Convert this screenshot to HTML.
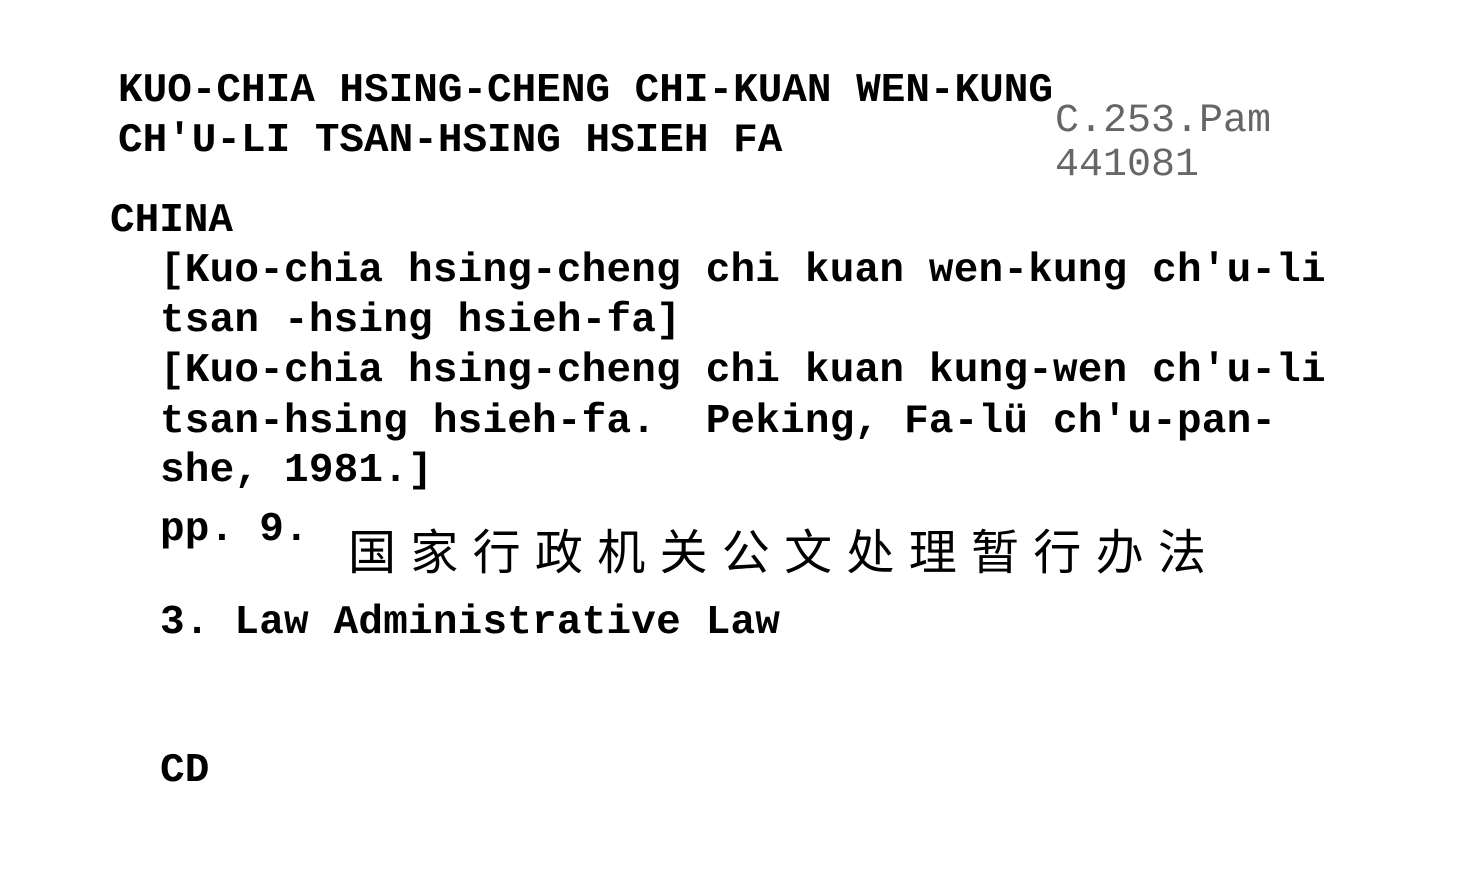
<!DOCTYPE html>
<html><head><meta charset="utf-8"><style>
html,body{margin:0;padding:0;background:#fff;}
body{width:1476px;height:889px;position:relative;overflow:hidden;}
.t{position:absolute;font-family:"Liberation Mono",monospace;font-size:41px;line-height:1;color:#000;white-space:pre;font-weight:bold;}
.l{font-weight:bold;letter-spacing:0.2px;}
.s{font-size:40px;font-weight:normal;color:#666;}
.c{position:absolute;font-family:"Noto Sans CJK SC","WenQuanYi Zen Hei",sans-serif;font-size:48px;letter-spacing:14.3px;line-height:1;white-space:pre;color:#000;}
</style></head><body>
<div class="t" style="left:118px;top:71px;">KUO-CHIA HSING-CHENG CHI-KUAN WEN-KUNG</div>
<div class="t" style="left:118px;top:121px;">CH'U-LI TSAN-HSING HSIEH FA</div>
<div class="t s" style="left:1055px;top:102px;">C.253.Pam</div>
<div class="t s" style="left:1055px;top:146px;">441081</div>
<div class="t" style="left:110px;top:201px;">CHINA</div>
<div class="t l" style="left:160px;top:251px;">[Kuo-chia hsing-cheng chi kuan wen-kung ch'u-li</div>
<div class="t l" style="left:160px;top:301px;">tsan -hsing hsieh-fa]</div>
<div class="t l" style="left:160px;top:351px;">[Kuo-chia hsing-cheng chi kuan kung-wen ch'u-li</div>
<div class="t l" style="left:160px;top:402px;">tsan-hsing hsieh-fa.  Peking, Fa-lü ch'u-pan-</div>
<div class="t l" style="left:160px;top:451px;">she, 1981.]</div>
<div class="t l" style="left:160px;top:510px;">pp. 9.</div>
<div class="c" style="left:348px;top:524px;">国家行政机关公文处理暂行办法</div>
<div class="t l" style="left:160px;top:603px;">3. Law Administrative Law</div>
<div class="t l" style="left:160px;top:751px;">CD</div>
</body></html>
